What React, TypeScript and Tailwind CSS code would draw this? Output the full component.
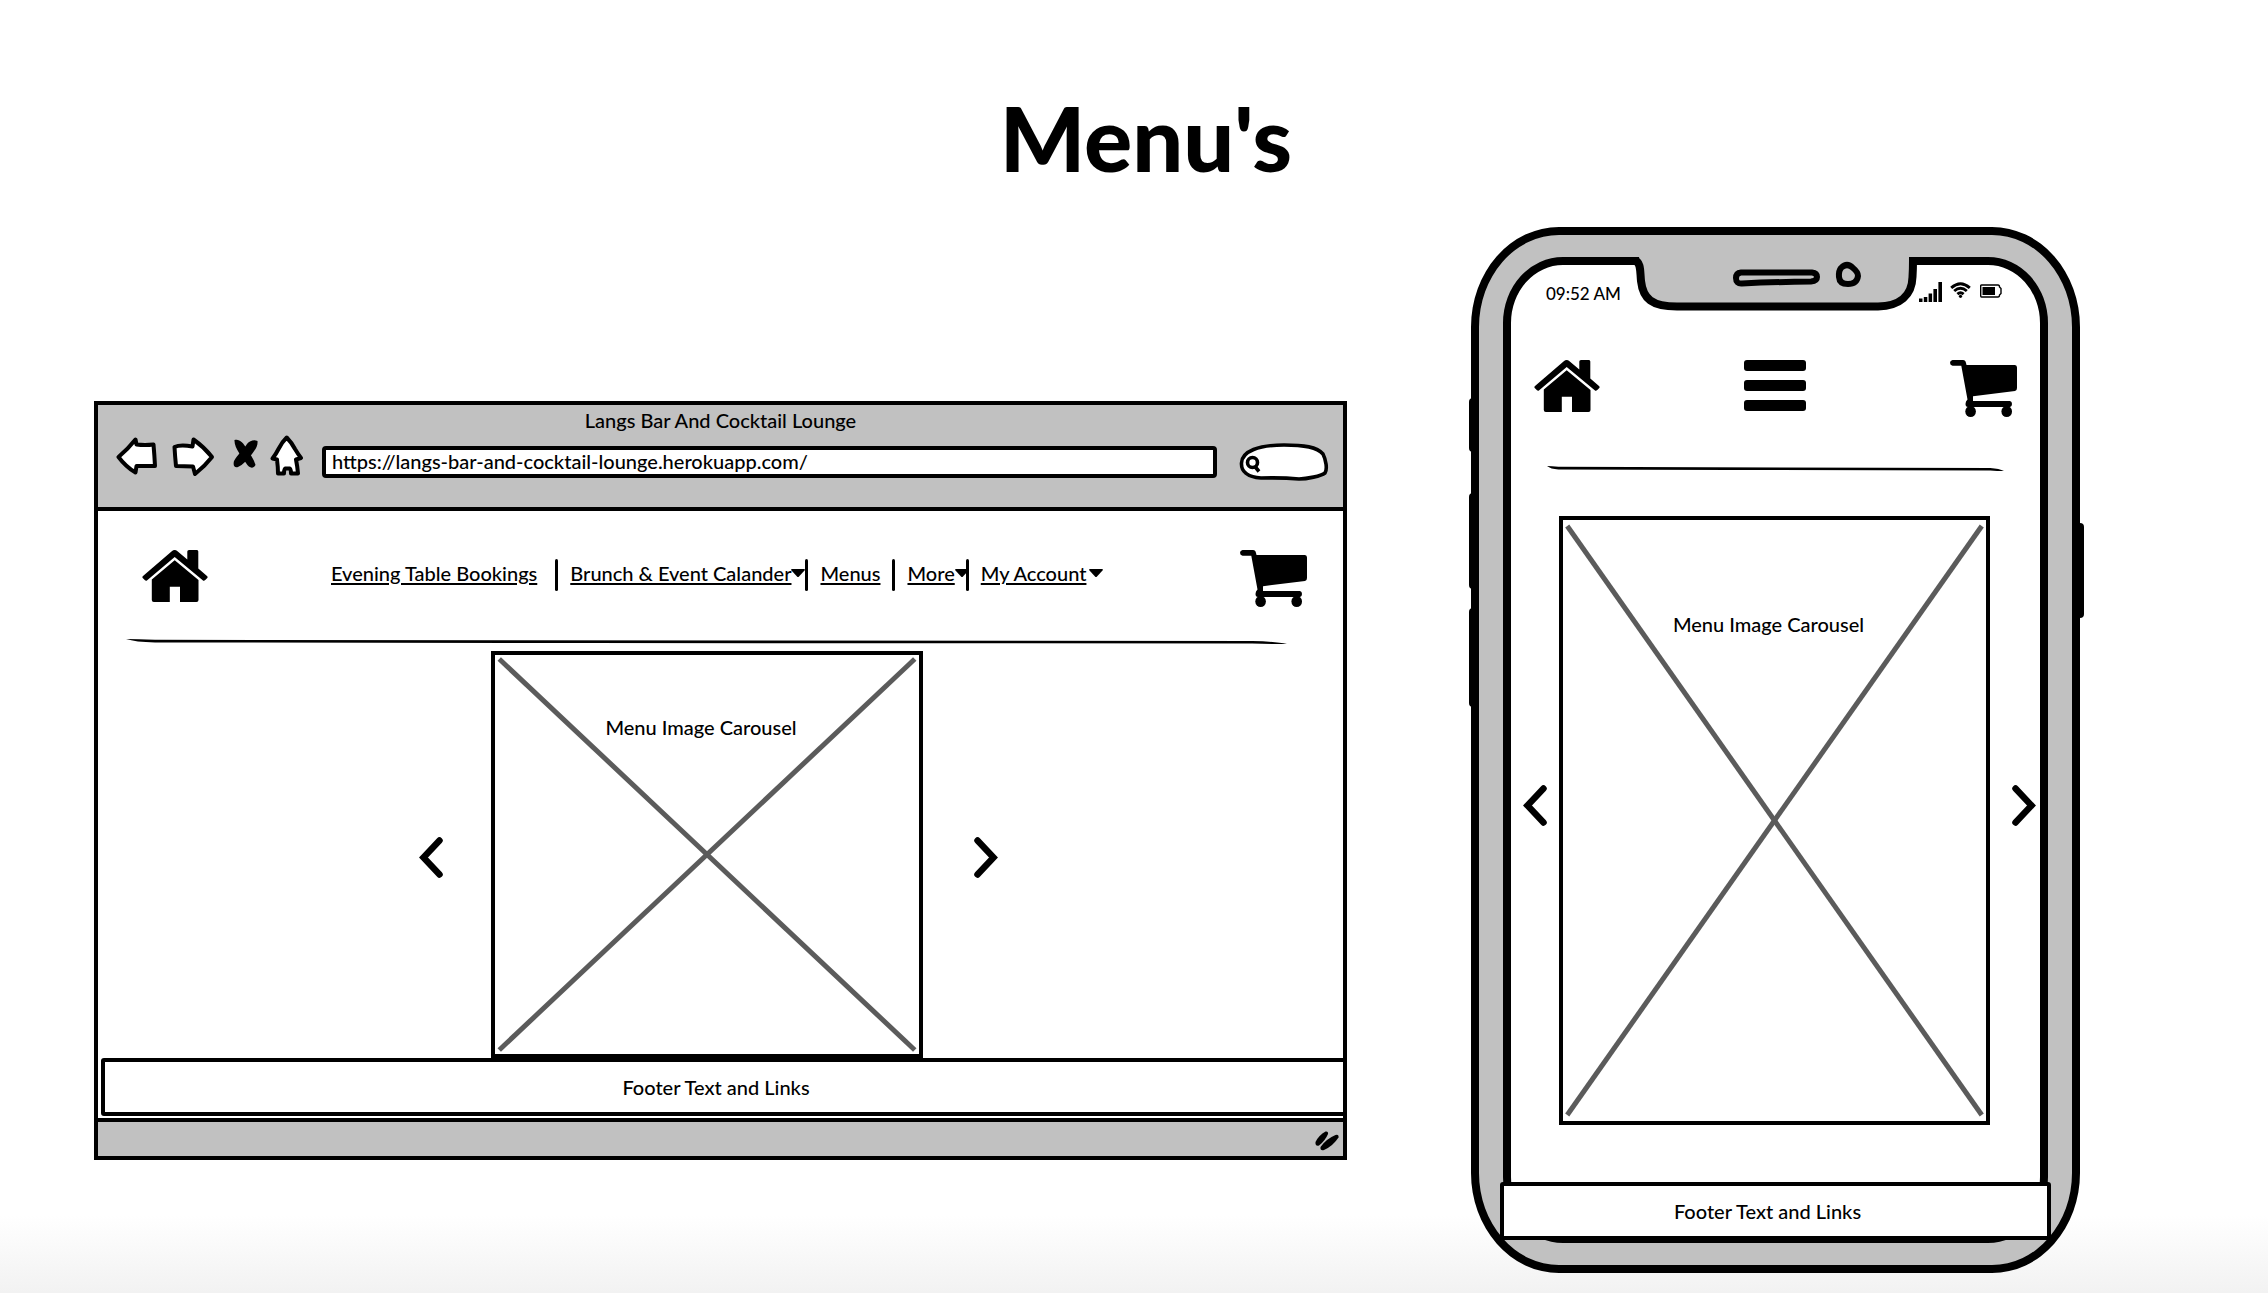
import React from "react";

function House() {
  return (
    <svg className="h-[52px] w-[66px]" viewBox="0 0 66 52" aria-hidden="true">
      <path d="M29.8 1.2Q32.6-1 35.5 1.2L45.3 9.6V1.5Q45.3 0 47 0H55Q56.3 0 56.3 1.5V18.5L65 26Q66 27 65.3 28L63 30.3Q61.8 31.2 60.7 30.2L32.7 7L5.2 30.2Q4 31.2 3 30.3L.7 28Q0 27 1 26Z" />
      <path d="M32.7 10.2L56.5 30V50Q56.5 52 54.5 52H38V36.7H27.8V52H11.8Q9.8 52 9.8 50V29.5Z" />
    </svg>
  );
}

function Cart() {
  return (
    <svg className="h-[57px] w-[67px]" viewBox="0 0 67 57" aria-hidden="true">
      <path d="M2.500 0H13Q15.500 0 16 3L16.500 5H65Q67 5.300 67 7.500V28Q67 30.300 65 31L23 36.200V41H60Q62 41.500 62 44T60 47H18Q15.500 47 15.500 44Q15.500 41 17.500 39.500L11.300 5.700H2.500Q0 5.200 0 2.800T2.500 0Z" />
      <ellipse cx="20.600" cy="51.500" rx="5.300" ry="5.500" />
      <ellipse cx="56.700" cy="51.500" rx="5.300" ry="5.500" />
    </svg>
  );
}

function Chevron({ dir }: { dir: "left" | "right" }) {
  return (
    <svg className="h-[41px] w-6" viewBox="0 0 24 41" fill="none" stroke="black" strokeWidth="6.500" strokeLinecap="round" aria-hidden="true">
      <path d={dir === "left" ? "M20.500 3.500L4.500 20.500L20.500 37.500" : "M3.500 3.500L19.500 20.500L3.500 37.500"} />
    </svg>
  );
}

function Rule({ className }: { className: string }) {
  return (
    <div role="separator" className={className}>
      <svg className="block h-[5px] w-full" viewBox="0 0 1000 5" preserveAspectRatio="none" aria-hidden="true">
        <path d="M0 0Q10 0 25 .8L970 2Q990 2.500 1000 5Q985 5 970 4.500L400 4L25 3.500Q8 3 0 0Z" />
      </svg>
    </div>
  );
}

function Placeholder({ className }: { className: string }) {
  return (
    <figure className={"relative border-4 border-black bg-white text-center " + className}>
      <svg className="absolute inset-0 h-full w-full" stroke="#5b5b5b" strokeWidth="5" aria-hidden="true">
        <line x1="1%" y1="1%" x2="99%" y2="99%" />
        <line x1="99%" y1="1%" x2="1%" y2="99%" />
      </svg>
      <figcaption className="relative">Menu Image Carousel</figcaption>
    </figure>
  );
}

function FooterBox({ className }: { className: string }) {
  return (
    <footer className={"relative flex h-[58px] items-center justify-center rounded-[3px] border-4 border-black bg-white pr-4 " + className}>
      Footer Text and Links
    </footer>
  );
}

function Caret({ className = "" }: { className?: string }) {
  return (
    <svg className={"h-2 w-[14px] shrink-0 " + className} viewBox="0 0 14 8" aria-hidden="true">
      <path d="M1 0H13Q14.500 0 13.500 1.500L8 7.500Q7 8.500 6 7.500L.5 1.500Q-.5 0 1 0Z" />
    </svg>
  );
}

function Separator() {
  return <span className="h-8 w-[3px] shrink-0 rounded-full bg-black" />;
}

const link = "pb-1 underline decoration-2 underline-offset-2";

function SiteNav() {
  return (
    <nav className="mt-[9px] ml-[123px] flex h-8 items-center whitespace-nowrap">
      <a href="#bookings" className={link}>Evening Table Bookings</a>
      <span className="w-[18px]" />
      <Separator />
      <span className="w-3" />
      <a href="#events" className={link}>Brunch &amp; Event Calander</a>
      <Caret className="mb-1" />
      <Separator />
      <span className="w-3" />
      <a href="#menus" className={link}>Menus</a>
      <span className="w-3" />
      <Separator />
      <span className="w-3" />
      <a href="#more" className={link}>More</a>
      <Caret className="mb-1" />
      <span className="-ml-[3px] flex">
        <Separator />
      </span>
      <span className="w-3" />
      <a href="#account" className={link}>My Account</a>
      <Caret className="mb-1 ml-[3px]" />
    </nav>
  );
}

function BrowserBar() {
  return (
    <header className="flex h-[106px] flex-col border-b-4 border-black bg-[#c1c1c1] pt-px">
      <div className="text-center leading-7">Langs Bar And Cocktail Lounge</div>
      <div className="flex items-start pr-[14px] pl-[18px]">
        <button aria-label="Back" className="mt-[2px] mr-[13px]">
          <svg className="h-10 w-[42px]" viewBox="0 0 42 40" fill="white" stroke="black" strokeWidth="4" strokeLinejoin="round">
            <path d="M2.500 21Q12 13 19.500 3.500L20.500 8.500Q29 9.500 37.500 8.500Q38.500 20 39 30Q32 30 20.500 30L19.500 36.500Q10 31 2.500 21Z" />
          </svg>
        </button>
        <button aria-label="Forward" className="mt-[2px] mr-[18px]">
          <svg className="h-[41px] w-[44px]" viewBox="0 0 44 41" fill="white" stroke="black" strokeWidth="4" strokeLinejoin="round">
            <path d="M3.500 11Q9 8.500 21.500 10.500L22.500 3.500Q33 11 41 21Q34 30 24 38L22 30.500L5 30Q4 20 3.500 11Z" />
          </svg>
        </button>
        <button aria-label="Stop" className="mt-[5px] mr-3">
          <svg className="h-[30px] w-[25px]" viewBox="0 0 25 30">
            <path d="M1.500 1C6-.5 10 3 14 10C17 15 21 20 22.500 26C20 30.500 16 29 13 24C10 19 1 9 1.500 1Z" />
            <path d="M24.500 2C25 6 23 10 19 15C14 21 10 26 5 28C1 29 0 26 1 22C5 15 10 11 14 5C17 1.500 21 .5 24.500 2Z" />
          </svg>
        </button>
        <button aria-label="Home" className="mt-px mr-[18px]">
          <svg className="h-[41px] w-[34px]" viewBox="0 0 34 41" fill="white" stroke="black" strokeWidth="4" strokeLinejoin="round">
            <path d="M16.700 2.500Q22 8 25 14Q28 19 31 23L26 24.500Q27.500 32 28 38.500L21 38.500Q21 34 19.500 33.500H15.500Q14 34 14 38.500L8 38.500Q8 32 7 24.500L2.500 23.500Q6 19 8.500 14Q12 7 16.700 2.500Z" />
          </svg>
        </button>
        <input
          aria-label="Address"
          className="mt-3 mr-[22px] h-[32px] min-w-0 flex-1 rounded-[4px] border-4 border-black bg-white px-[6px] pb-[3px]"
          defaultValue="https://langs-bar-and-cocktail-lounge.herokuapp.com/"
        />
        <div className="relative mt-[9px] h-[38px] w-[90px]">
          <svg className="absolute inset-0" viewBox="0 0 90 38" fill="white" stroke="black" strokeWidth="3.600" strokeLinejoin="round" aria-hidden="true">
            <path d="M2.500 20C3 8 20 2 45 2C65 2 78 4 84 11C87 17 88.500 26 86 30C82 33 68 36 60 36C50 35 40 34.500 22 35C8 34 2 28 2.500 20Z" />
            <ellipse cx="13.500" cy="19.500" rx="5" ry="5" />
            <path d="M15.500 23L20 28.500" />
          </svg>
          <input aria-label="Search" className="relative h-full w-full bg-transparent pr-4 pl-6 outline-none" />
        </div>
      </div>
    </header>
  );
}

function BrowserWindow() {
  return (
    <section className="mt-[174px] border-4 border-black bg-white">
      <BrowserBar />
      <div className="flex items-start pt-[39px] pr-9 pl-11">
        <a href="#home" aria-label="Home">
          <House />
        </a>
        <SiteNav />
        <a href="#cart" aria-label="Cart" className="ml-auto">
          <Cart />
        </a>
      </div>
      <Rule className="mt-8 mr-14 ml-7" />
      <div className="mt-[7px] flex items-center justify-center pr-6">
        <button aria-label="Previous" className="mt-[6px] mr-12">
          <Chevron dir="left" />
        </button>
        <Placeholder className="h-[407px] w-[432px] pt-[60px] pr-3" />
        <button aria-label="Next" className="mt-[6px] ml-[51px]">
          <Chevron dir="right" />
        </button>
      </div>
      <FooterBox className="-mr-1 ml-[3px]" />
      <div className="mt-[2px] flex h-[38px] items-center justify-end border-t-4 border-black bg-[#c1c1c1] pr-1">
        <svg className="mt-1 h-5 w-6" viewBox="0 0 24 20" aria-hidden="true">
          <path d="M10.500.5Q13.500 0 13 3Q10 10 4 14.500Q0 15.500 .5 11Q4 4 10.500.5Z" />
          <path d="M20.500 4Q24 3 23.500 6.500Q18 15 9 19Q5 20 5.500 16Q11 8 20.500 4Z" />
        </svg>
      </div>
    </section>
  );
}

function Notch() {
  return (
    <svg className="absolute -top-2 left-1/2 h-14 w-[284px] -translate-x-1/2" viewBox="0 0 284 56" fill="none" stroke="black" aria-hidden="true">
      <path d="M5 0H279V20Q276 50 244 50H42Q12 50 9 20Z" fill="#c1c1c1" stroke="none" />
      <path d="M0 4H1C7 5 6 14 7 24C9 42 18 49.500 43 49.500H244C266 49 278 38 278.500 20Q279 12 279 4H284" strokeWidth="8" />
      <path d="M107 15.500H178Q183 16 183 20T177 24.500Q140 25 108 26.500Q102 27 102 21Q102 16 107 15.500Z" strokeWidth="6" />
      <path d="M207 11Q213 5 219 11Q224 15 224 19Q223 27 214 27Q205.500 27 205 20Q204.500 14 207 11Z" strokeWidth="6" />
    </svg>
  );
}

function StatusIcons() {
  return (
    <div className="flex items-start">
      <svg className="mr-2 h-5 w-[23px]" viewBox="0 0 23 20" aria-hidden="true">
        <path d="M0 16.500H3.500V20H0ZM4.800 15H8.300V20H4.800ZM9.600 11.500H13.100V20H9.600ZM14.400 7H18V20H14.400ZM19.400 0H23V20H19.400Z" />
      </svg>
      <svg className="mr-[9px] h-4 w-[21px]" viewBox="0 0 21 16" fill="none" stroke="black" strokeWidth="2.900" aria-hidden="true">
        <path d="M1.200 5.800Q10.500-2.500 19.800 5.800M4.200 9Q10.500 3.500 16.800 9M7.400 12.100Q10.500 9.300 13.600 12.100" />
        <circle cx="10.500" cy="14.300" r="1.600" fill="black" stroke="none" />
      </svg>
      <svg className="mt-[2px] h-[14px] w-[22px]" viewBox="0 0 22 14" aria-hidden="true">
        <path d="M1.500 1H18Q19.500 1 19.500 3L21 4.500V9.500L19.500 11Q19.500 13 18 13H1.500Q.7 13 .7 12V2Q.7 1 1.500 1Z" fill="none" stroke="black" strokeWidth="1.400" />
        <path d="M2.500 3H15V11H2.500Z" />
      </svg>
    </div>
  );
}

function Phone() {
  return (
    <section className="relative rounded-[88px/100px] border-8 border-black bg-[#c1c1c1] px-6 py-[22px]">
      <span className="absolute top-[163px] -left-[10px] h-[54px] w-2 rounded-l-[4px] bg-black" />
      <span className="absolute top-[258px] -left-[10px] h-24 w-2 rounded-l-[4px] bg-black" />
      <span className="absolute top-[373px] -left-[10px] h-[99px] w-2 rounded-l-[4px] bg-black" />
      <span className="absolute top-[288px] -right-3 h-[95px] w-3 rounded-r-[4px] bg-black" />
      <div className="relative rounded-[60px/66px] border-8 border-black bg-white">
        <Notch />
        <div className="flex items-start justify-between pt-[17px] pr-[38px] pl-[35px]">
          <time className="text-[17px] leading-6">09:52 AM</time>
          <StatusIcons />
        </div>
        <div className="mt-[54px] flex items-start justify-between px-[23px]">
          <a href="#home" aria-label="Home">
            <House />
          </a>
          <button aria-label="Open navigation" className="flex flex-col gap-[9px]">
            <span className="h-[11px] w-[62px] rounded-[3px] bg-black" />
            <span className="h-[11px] w-[62px] rounded-[3px] bg-black" />
            <span className="h-[11px] w-[62px] rounded-[3px] bg-black" />
          </button>
          <a href="#cart" aria-label="Cart">
            <Cart />
          </a>
        </div>
        <Rule className="mx-9 mt-[49px]" />
        <div className="mt-[45px] flex items-center pr-1 pl-3">
          <button aria-label="Previous" className="mr-3 mb-[30px]">
            <Chevron dir="left" />
          </button>
          <Placeholder className="h-[609px] flex-1 pt-[92px] pr-3" />
          <button aria-label="Next" className="mb-[30px] ml-[22px]">
            <Chevron dir="right" />
          </button>
        </div>
        <FooterBox className="-mx-[11px] mt-[57px] -mb-[5px]" />
      </div>
    </section>
  );
}

export default function App() {
  return (
    <main className="min-h-screen bg-[linear-gradient(to_bottom,#fff_0%,#fff_94%,#f2f2f2_100%)] pt-[87px] pb-5 font-['Lato',sans-serif] text-[20px] leading-6 font-medium text-black">
      <h1 className="pl-6 text-center text-[90px] leading-[100px] font-black">Menu's</h1>
      <div className="mt-10 grid grid-cols-[1253fr_609fr] items-start gap-[124px] pr-[188px] pl-[94px]">
        <BrowserWindow />
        <Phone />
      </div>
    </main>
  );
}
